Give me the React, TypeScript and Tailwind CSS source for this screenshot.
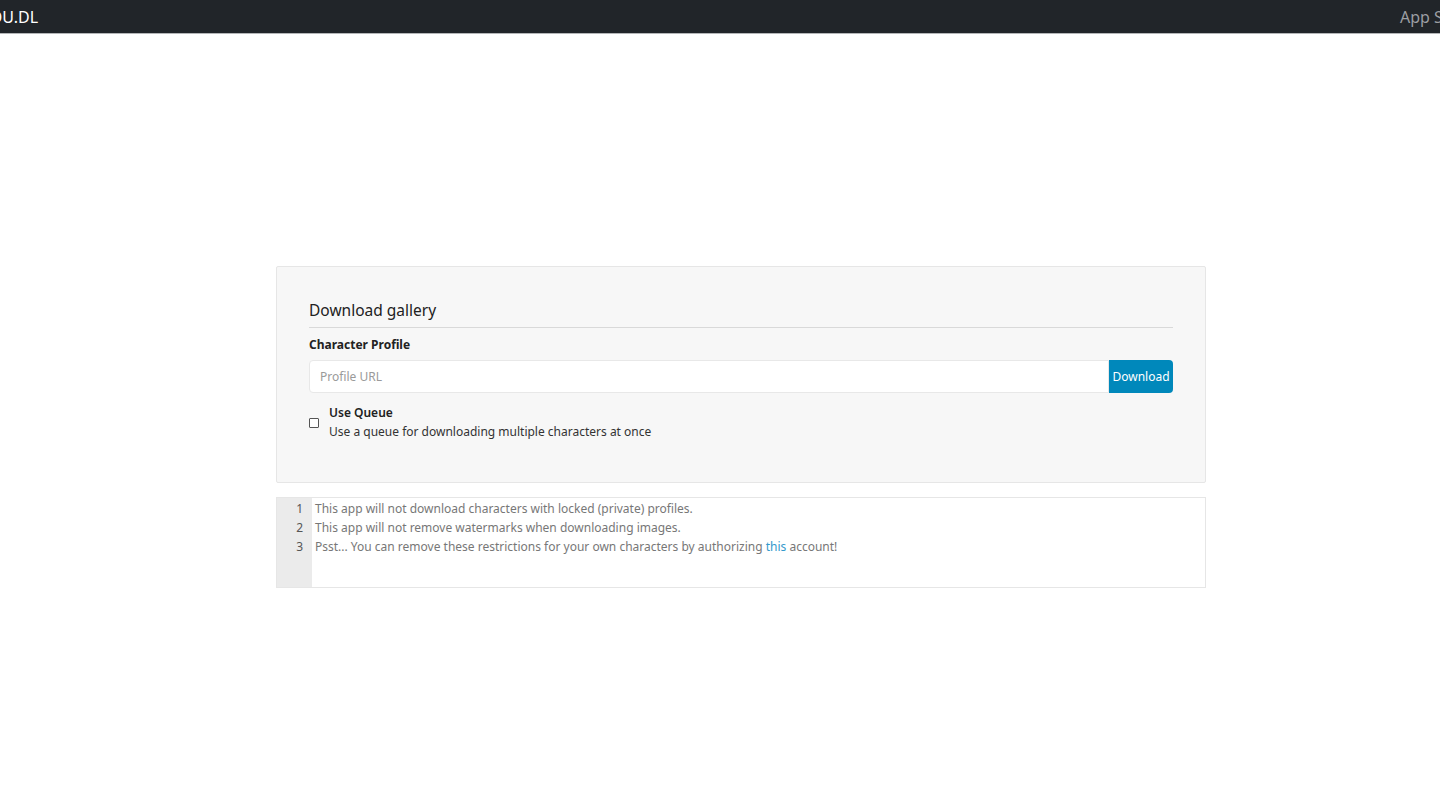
import React from "react";

export default function App() {
  return (
    <div className="min-h-[802px] bg-white" style={{ fontFamily: '"Noto Sans", "Open Sans", sans-serif' }}>
      <nav className="h-[34px] bg-[#212529] border-b border-[#b4b6b8] overflow-hidden relative flex items-center justify-between">
        <span className="text-[16px] text-white whitespace-nowrap ml-[-52px]">TOYHOU.DL</span>
        <span className="text-[16px] text-[#9c9fa3] whitespace-nowrap mr-[-55px]">App Settings</span>
      </nav>
      <div className="w-[930px] ml-[276px] pt-[232px]">
        <div className="bg-[#f7f7f7] border border-[#e6e6e6] rounded-[2px] px-[32px] pt-[32px] pb-[41px]">
          <h2 className="text-[15.5px] text-[#222] leading-[22px] pb-[6px] border-b border-[#d9d9d9]">Download gallery</h2>
          <div className="mt-[9px] text-[12px] font-bold text-[#222] leading-[16px]">Character Profile</div>
          <div className="mt-[7px] flex h-[33px]">
            <input
              className="flex-1 bg-white border border-[#e8e8e8] rounded-l-[4px] px-[10px] text-[12px] text-[#444] placeholder:text-[#9a9a9a] outline-none"
              placeholder="Profile URL"
            />
            <button className="w-[64px] bg-[#0088bb] text-white text-[12px] rounded-r-[4px]">Download</button>
          </div>
          <div className="mt-[10px] flex items-center gap-[10px]">
            <span className="w-[10px] h-[10px] border border-[#555] bg-white rounded-[1px] mt-[2px]"></span>
            <div>
              <div className="text-[12px] font-semibold text-[#222] leading-[19px]">Use Queue</div>
              <div className="text-[12px] text-[#333] leading-[19px]">Use a queue for downloading multiple characters at once</div>
            </div>
          </div>
        </div>
        <div className="mt-[14px] flex h-[91px] border border-[#e6e6e6] bg-white">
          <div className="w-[35px] bg-[#ebebeb] pt-[1px] text-right pr-[9px] text-[12px] leading-[19px] text-[#555]">
            <div>1</div>
            <div>2</div>
            <div>3</div>
          </div>
          <div className="pl-[3px] pt-[1px] text-[12px] leading-[19px] text-[#777]">
            <div>This app will not download characters with locked (private) profiles.</div>
            <div>This app will not remove watermarks when downloading images.</div>
            <div>
              Psst... You can remove these restrictions for your own characters by authorizing{" "}
              <span className="text-[#3399cc]">this</span> account!
            </div>
          </div>
        </div>
      </div>
    </div>
  );
}
